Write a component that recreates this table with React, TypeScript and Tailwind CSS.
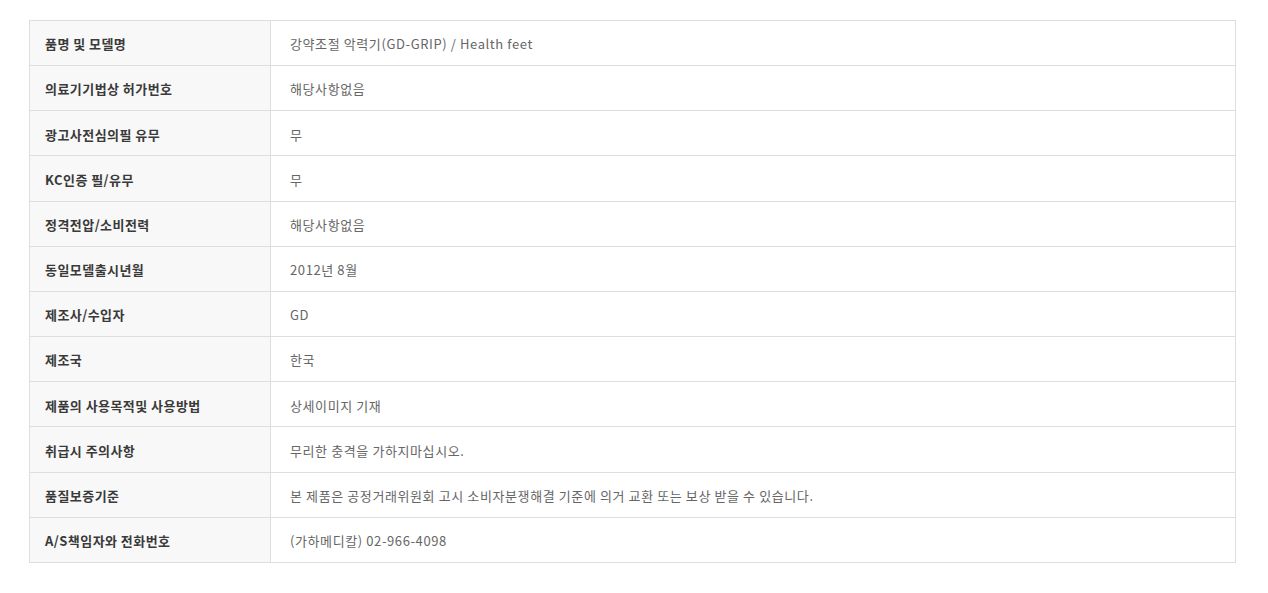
const rows: [string, string][] = [
  ["품명 및 모델명", "강약조절 악력기(GD-GRIP) / Health feet"],
  ["의료기기법상 허가번호", "해당사항없음"],
  ["광고사전심의필 유무", "무"],
  ["KC인증 필/유무", "무"],
  ["정격전압/소비전력", "해당사항없음"],
  ["동일모델출시년월", "2012년 8월"],
  ["제조사/수입자", "GD"],
  ["제조국", "한국"],
  ["제품의 사용목적및 사용방법", "상세이미지 기재"],
  ["취급시 주의사항", "무리한 충격을 가하지마십시오."],
  ["품질보증기준", "본 제품은 공정거래위원회 고시 소비자분쟁해결 기준에 의거 교환 또는 보상 받을 수 있습니다."],
  ["A/S책임자와 전화번호", "(가하메디칼) 02-966-4098"],
];

export default function App() {
  return (
    <div
      className="min-h-screen bg-white pl-[29px] pt-[20px]"
      style={{ fontFamily: '"Noto Sans CJK KR", "Noto Sans", sans-serif' }}
    >
      <table className="w-[1207px] border-collapse text-[13px]">
        <tbody>
          {rows.map(([label, value]) => (
            <tr key={label} className="h-[45.17px]">
              <th className="w-[241px] border border-[#dedede] bg-[#f8f8f8] pl-[15px] pt-[2px] text-left font-bold tracking-[0.45px] text-[#3a3a3a]">
                {label}
              </th>
              <td className="border border-[#dedede] pl-[19px] pt-[2px] text-left font-normal tracking-[0.6px] text-[#666]">
                {value}
              </td>
            </tr>
          ))}
        </tbody>
      </table>
    </div>
  );
}
